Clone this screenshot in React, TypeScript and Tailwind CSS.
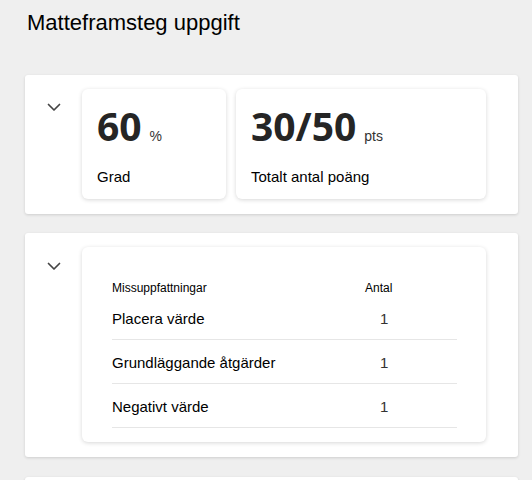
import React from 'react';

const rows = [
  { name: 'Placera värde', count: 1 },
  { name: 'Grundläggande åtgärder', count: 1 },
  { name: 'Negativt värde', count: 1 },
];

function Chevron() {
  return (
    <svg width="14" height="9" viewBox="0 0 14 9" fill="none">
      <path d="M1.5 1.5 L7 7 L12.5 1.5" stroke="#444" strokeWidth="1.7" strokeLinecap="round" strokeLinejoin="round" />
    </svg>
  );
}

function Metric({ value, unit, label, width }: { value: string; unit: string; label: string; width: string }) {
  return (
    <div className={`${width} h-[110px] rounded-[6px] bg-white pl-[15px] pt-[17px] shadow-[0_1px_4px_rgba(0,0,0,0.16)]`}>
      <div className="flex items-baseline">
        <span className="font-['Open_Sans',sans-serif] text-[39px] font-bold leading-[40px] text-[#252525]">{value}</span>
        <span className="ml-[8px] text-[14px] text-[#333]">{unit}</span>
      </div>
      <div className="mt-[20px] text-[15px] leading-[20px] text-black">{label}</div>
    </div>
  );
}

export default function App() {
  return (
    <div className="min-h-screen bg-[#efefef] pl-[25px] pr-[14px] font-['Liberation_Sans',Arial,sans-serif]">
      <h1 className="pl-[2px] pt-[9px] text-[22px] font-normal leading-[28px] text-black">Matteframsteg uppgift</h1>

      <section className="mt-[38px] flex rounded-[3px] bg-white pt-[14px] pb-[15px] shadow-[0_1px_3px_rgba(0,0,0,0.14)]">
        <div className="w-[57px] shrink-0 pl-[22px] pt-[14px]">
          <Chevron />
        </div>
        <div className="flex gap-[10px]">
          <Metric value="60" unit="%" label="Grad" width="w-[144px]" />
          <Metric value="30/50" unit="pts" label="Totalt antal poäng" width="w-[250px]" />
        </div>
      </section>

      <section className="mt-[19px] flex rounded-[3px] bg-white pt-[14px] pb-[15px] shadow-[0_1px_3px_rgba(0,0,0,0.14)]">
        <div className="w-[57px] shrink-0 pl-[22px] pt-[15px]">
          <Chevron />
        </div>
        <div className="w-[404px] rounded-[6px] bg-white pl-[30px] pr-[29px] pt-[33px] pb-[14px] shadow-[0_1px_4px_rgba(0,0,0,0.16)]">
          <div className="grid grid-cols-[253px_1fr] text-[12px] leading-[16px] text-black">
            <span>Missuppfattningar</span>
            <span>Antal</span>
          </div>
          {rows.map((r) => (
            <div key={r.name} className="grid grid-cols-[253px_1fr] border-b border-[#e6e6e6] pt-[13px] pb-[10px] text-[15px] leading-[20px]">
              <span className="text-black">{r.name}</span>
              <span className="pl-[15px] text-[#333]">{r.count}</span>
            </div>
          ))}
        </div>
      </section>

      <section className="mt-[20px] h-[120px] rounded-[3px] bg-white shadow-[0_1px_3px_rgba(0,0,0,0.14)]" />
    </div>
  );
}
